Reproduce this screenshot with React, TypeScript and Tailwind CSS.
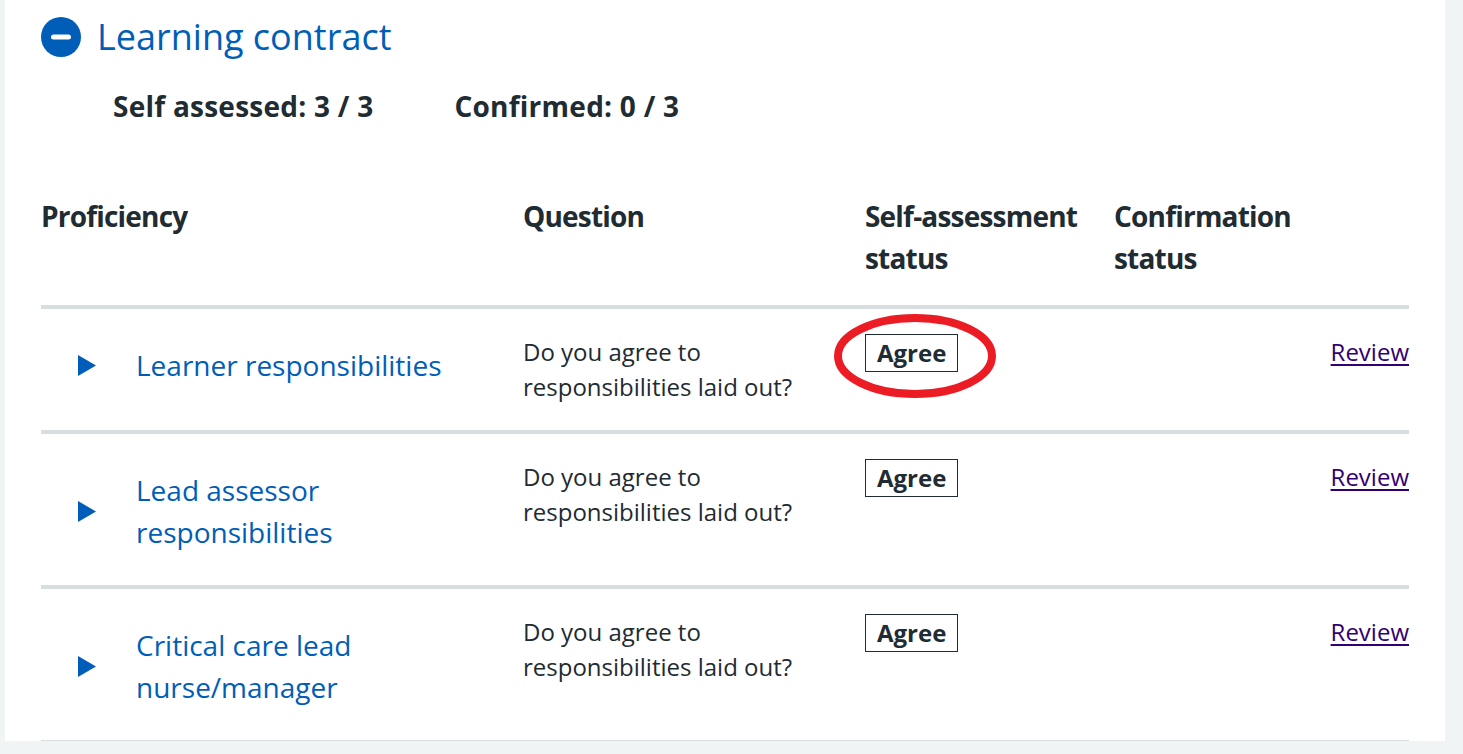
import React from "react";

const rows = [
  { lines: ["Learner responsibilities"], circled: true },
  { lines: ["Lead assessor", "responsibilities"], circled: false },
  { lines: ["Critical care lead", "nurse/manager"], circled: false },
];

function Triangle() {
  return (
    <svg width="18" height="21" viewBox="0 0 18 21" className="shrink-0">
      <polygon points="0,0 18,10.5 0,21" fill="#005eb8" />
    </svg>
  );
}

export default function App() {
  return (
    <div className="min-h-screen bg-[#f0f4f5] pl-[5px] font-['Open_Sans',sans-serif] text-[#212b32]">
      <div className="w-[1440px] bg-white px-[36px] pt-[15px]">
        <div className="flex items-center gap-[16px]">
          <svg width="40" height="40" viewBox="0 0 40 40" className="shrink-0">
            <circle cx="20" cy="20" r="20" fill="#005eb8" />
            <rect x="10" y="17.5" width="20" height="5" rx="2.5" fill="#ffffff" />
          </svg>
          <h2 className="text-[36px] leading-[44px] text-[#005eb8]">Learning contract</h2>
        </div>

        <div className="mt-[26px] flex gap-[81px] pl-[72px] text-[28px] font-bold leading-[42px] tracking-[0.25px]">
          <span>Self assessed: 3 / 3</span>
          <span>Confirmed: 0 / 3</span>
        </div>

        <div className="mt-[68px]">
          <div className="grid grid-cols-[482px_342px_249px_1fr_auto] border-b-4 border-[#d8dde0] pb-[26px] text-[28px] font-bold leading-[42px] tracking-[-0.8px]">
            <div className="pr-[16px]">Proficiency</div>
            <div className="pr-[16px]">Question</div>
            <div className="pr-[16px]">Self-assessment status</div>
            <div className="pr-[16px]">Confirmation status</div>
            <div className="w-[80px]"></div>
          </div>

          {rows.map((r, i) => (
            <div
              key={i}
              className={
                "grid grid-cols-[482px_342px_249px_1fr_auto] border-[#d8dde0] " +
                (i < rows.length - 1 ? "border-b-4" : "border-b")
              }
            >
              <div className="flex items-center self-start pt-[35px] pb-[32px] pl-[37px]">
                <Triangle />
                <div className="ml-[40px] text-[28px] leading-[42px] text-[#005eb8]">
                  {r.lines.map((l, j) => (
                    <React.Fragment key={j}>
                      {j > 0 && <br />}
                      {l}
                    </React.Fragment>
                  ))}
                </div>
              </div>
              <div className="pt-[25px] pb-[26px] pr-[24px] text-[24px] leading-[35px]">
                Do you agree to responsibilities laid out?
              </div>
              <div className="pt-[25px]">
                <span className="relative inline-block border border-[#212b32] px-[11px] text-[24px] font-bold leading-[36px]">
                  Agree
                  {r.circled && (
                    <svg
                      className="pointer-events-none absolute left-[-32px] top-[-21px]"
                      width="162"
                      height="84"
                      viewBox="0 0 162 84"
                    >
                      <ellipse cx="81" cy="42" rx="77" ry="38" fill="none" stroke="#ec1c24" strokeWidth="8" />
                    </svg>
                  )}
                </span>
              </div>
              <div></div>
              <div className="pt-[25px] text-right text-[24px] leading-[35px]">
                <a href="#" className="text-[#330072] underline decoration-2 underline-offset-[3px]">
                  Review
                </a>
              </div>
            </div>
          ))}
        </div>
      </div>
    </div>
  );
}
